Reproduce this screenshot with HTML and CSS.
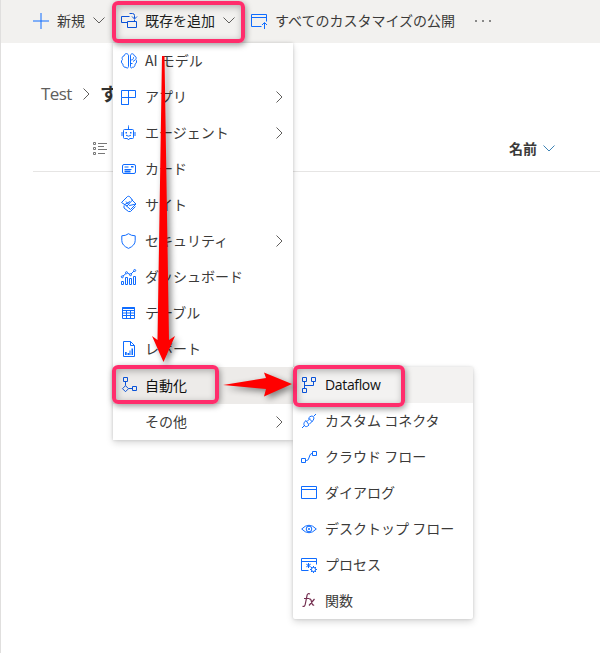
FILE: index.html
```
<!DOCTYPE html>
<html lang="ja">
<head>
<meta charset="utf-8">
<title>Test</title>
<link rel="stylesheet" href="styles.css">
</head>
<body>
<header class="bar">
  <button class="cmd new"><svg class="ic" viewBox="0 0 16 16"><path d="M8 0v16M0 8h16"/></svg><span>新規</span><svg class="chev" viewBox="0 0 12 7"><path d="M.5.5 6 6 11.5.5"/></svg></button>
  <button class="cmd add"><svg class="ic dark" viewBox="0 0 16 16"><path d="M6.500 9.500h-6v-6h8M13.500 8V6.500M6.500 8.500h9v6h-9zM8.500.500h3q2 0 2 2v3M11 3.500l2.500 2.500L16 3.500"/></svg><span>既存を追加</span><svg class="chev" viewBox="0 0 12 7"><path d="M.5.5 6 6 11.5.5"/></svg></button>
  <button class="cmd publish"><svg class="ic" viewBox="0 0 16 16"><path d="M10.500 13.500H.5V1.500h15v7M.5 4.500h15M13.500 16v-6M11 12l2.500-2.500L16 12"/></svg><span>すべてのカスタマイズの公開</span></button>
  <button class="more"><i></i><i></i><i></i></button>
</header>
<main>
  <nav class="crumb"><span>Test</span><svg class="next" viewBox="0 0 7 12"><path d="M.5.5 6 6 .5 11.500"/></svg><b>す</b></nav>
  <div class="head">
    <svg class="list" viewBox="0 0 14 13"><path d="M.5.500h2v2h-2zM.5 5.500h2v2h-2zM.5 10.500h2v2h-2zM5 1.500h9M5 4.500h6M5 7.500h9M5 11.500h7"/></svg>
    <div class="name"><b>名前</b><svg class="chev blue" viewBox="0 0 12 7"><path d="M.5.5 6 6 11.5.5"/></svg></div>
  </div>
</main>

<ul class="menu primary">
  <li><svg class="ic" viewBox="0 0 16 16"><path d="M7.500 2.200C6.500-.2 3.500.3 3.300 2.700 1 3 .8 5.500 1.500 6.400-.2 8 .2 10.500 2 11.200c-.2 2.300 1.500 3.500 3 3.100 1.200 1.500 2.500.5 2.500-.8zM9.500 2.200c.8-2.300 3.500-1.600 3.700.5 2 .4 2.400 2.500 1.500 3.700 1.500 1.500 1 4-.7 4.800.2 2.200-1.300 3.500-2.500 3.100-1 1.400-2 .5-2-.8zM9.500 7c3 0 3-1.500 3-3M9.500 10.500h2M14 7l-2 1.500"/></svg><span>AI モデル</span></li>
  <li><svg class="ic" viewBox="0 0 16 16"><path d="M.5 1.500h14v7H.5zM7.500 1.500v14h-7v-7M7.500 15.500H.5"/></svg><span>アプリ</span><svg class="next" viewBox="0 0 7 12"><path d="M.5.5 6 6 .5 11.500"/></svg></li>
  <li><svg class="ic" viewBox="0 0 16 16"><path d="M3.500 4.500h8q1 0 1 1v7q0 1-1 1h-3l-1 1.500-1-1.500h-3q-1 0-1-1v-7q0-1 1-1zM7.500 4V1.500M7 1h1M1 7v4M14 7v4M5 10.200q2.500 2 5 0"/><path class="solid" d="M4.500 7h1.500v1.500H4.500zM9 7h1.500v1.500H9z"/></svg><span>エージェント</span><svg class="next" viewBox="0 0 7 12"><path d="M.5.5 6 6 .5 11.500"/></svg></li>
  <li><svg class="ic" viewBox="0 0 16 16"><rect x="1.500" y="3.500" width="13" height="9" rx="1.500"/><path d="M3.500 6h4M3.500 8.500h7"/><path class="solid" d="M3.500 9.500h6v2h-6zM10 5h2.500v1.500H10z"/></svg><span>カード</span></li>
  <li><svg class="ic up" viewBox="0 0 16 16"><path d="m.5 6.500 6-6q1-.5 2 0l3 3.500-5.500 6zM5 5.500l3.500 4 6.500-1.500-4.500-4.500M3 9l6-3.500M15 8l-5.500 5.500L5 9.500M3 9.500v2.500l4.500 3.500h2l5-5"/></svg><span>サイト</span></li>
  <li><svg class="ic" viewBox="0 0 16 16"><path d="M.8 2.800Q4.800 2.800 7.500.7q2.700 2.100 6.700 2.100v4.700q0 5-6.700 7.900-6.700-2.900-6.700-7.900z"/></svg><span>セキュリティ</span><svg class="next" viewBox="0 0 7 12"><path d="M.5.5 6 6 .5 11.500"/></svg></li>
  <li><svg class="ic" viewBox="0 0 16 16"><path d="M.5 12.500h2v3h-2zM4.500 8.500h2v7h-2zM8.500 9.500h2v6h-2zM12.500 7.500h2v8h-2zM2 7l3-2.500M6.500 4 9 5.500M10 5l3-3"/><circle cx="1.300" cy="7.800" r="1"/><circle cx="5.500" cy="3.700" r="1"/><circle cx="9.500" cy="5.700" r="1"/><circle cx="13.700" cy="1.500" r="1"/></svg><span>ダッシュボード</span></li>
  <li><svg class="ic" viewBox="0 0 16 16"><path d="M1.500 2.500h12v11h-12zM1.500 5.500h12M1.500 8h12M1.500 10.500h12M5.500 5v8.500M9.500 5v8.500"/><path class="solid" d="M1.500 2h12v2h-12z"/></svg><span>テーブル</span></li>
  <li><svg class="ic" viewBox="0 0 16 16"><path d="M2.500.500h7l4 4v11h-11zM9.500.500v4h4"/><path class="solid" d="M4 11h1.700v3H4zM6.500 12h1.700v2H6.500zM8.500 9.500h1v4.500h-1zM10.500 7.500H12V14h-1.500z"/></svg><span>レポート</span></li>
  <li class="on"><svg class="ic dark up" viewBox="0 0 16 16"><path d="M2.500.500h4v4h-4zM4.500 4.500v4.200M4.500 8.700l3 3-3 3-3-3zM7.500 11.500h4M11.500 9.500h4v4h-4z"/></svg><span>自動化</span></li>
  <li><svg class="ic" viewBox="0 0 16 16"></svg><span>その他</span><svg class="next" viewBox="0 0 7 12"><path d="M.5.5 6 6 .5 11.500"/></svg></li>
</ul>

<ul class="menu secondary">
  <li class="on"><svg class="ic dark" viewBox="0 0 16 16"><path d="M1.500.500h4v4h-4zM10.500.500h4v4h-4zM1.500 11.500h4v4h-4zM3.500 4.500v7M3.500 8.500h9v-4"/></svg><span class="latin">Dataflow</span></li>
  <li><svg class="ic" viewBox="0 0 16 16"><path d="m1 15 3-3M12.500 3.500 15 1M8 12c-2 2-3.500 2-4.500.8S2.500 9.500 5 7.500zM7.500 5c2-2 3.500-2.500 4.700-1.300s.8 3-1.200 4.800zM6 8.500l3-3M8.500 11l3-3"/></svg><span>カスタム コネクタ</span></li>
  <li><svg class="ic" viewBox="0 0 16 16"><path d="M.5 9.500h4v4h-4zM11.500 2.500h4v4h-4zM4.500 11.500h1Q7 11.500 7.500 10l1.500-4Q9.500 4.500 11 4.500h.5"/></svg><span>クラウド フロー</span></li>
  <li><svg class="ic" viewBox="0 0 16 16"><path d="M.5 1.500h15v12H.5zM.5 4.500h15"/></svg><span>ダイアログ</span></li>
  <li><svg class="ic" viewBox="0 0 16 16"><path d="M.7 8q7.300-7.500 14.600 0Q8 15.500.7 8z"/><circle cx="8" cy="8" r="2.800"/><circle class="solid" cx="8" cy="8" r="1"/></svg><span>デスクトップ フロー</span></li>
  <li><svg class="ic" viewBox="0 0 16 16"><path d="M7.500 13.500h-7v-12h15v6M.5 4.500h15M7.500 6v5M5.300 7.200l4.400 2.600M9.700 7.200 5.300 9.800"/><circle cx="12.500" cy="12.500" r="2.100"/><path d="M12.500 9v1.500M12.500 14.500V16M9 12.500h1.500M14.500 12.500H16M10 10l1 1M14 14l1 1M15 10l-1 1M11 14l-1 1"/></svg><span>プロセス</span></li>
  <li><svg class="ic wine" viewBox="0 0 16 16"><path d="M9 1Q6.700-.1 6.100 2.200L4.200 11.500Q3.700 14 1.500 13.200M3 5.500h5M8 6q1.500-.5 2 1l1.200 4q.5 1.500 2 1M13.500 6 8 12.500"/></svg><span>関数</span></li>
</ul>

<div class="mark m1"></div>
<div class="mark m2"></div>
<div class="mark m3"></div>
<svg class="arrows" viewBox="0 0 600 653"><path d="M162 56h2.500L169 340l6-4-11.500 26L152 336l5.500 4z"/><path d="m223 385 43-7-2-5.500 28 11.500-28 12.500 2-7.500z"/></svg>
</body>
</html>
```
FILE: styles.css
```
* { box-sizing: border-box; }
body {
  margin: 0;
  height: 653px;
  position: relative;
  overflow: hidden;
  background: #fff;
  border-left: 1px solid #e0dfde;
  color: #3b3a39;
  font: 14px/20px "Noto Sans CJK JP", sans-serif;
}
button {
  border: 0;
  padding: 0;
  background: none;
  color: inherit;
  font: inherit;
}
svg { display: block; fill: none; stroke: #0f6cff; overflow: visible; }
.ic { width: 16px; height: 16px; flex: none; }
.ic.dark { stroke: #0b53d8; }
.ic.wine { stroke: #742f50; stroke-width: 1.2; }
.ic.up { margin-top: -2px; }
.solid { fill: #0f6cff; stroke: none; }
.bar { display: flex; align-items: center; height: 43px; padding: 0 0 2px 32px; background: #f2f1ef; white-space: nowrap; }
.cmd { display: flex; align-items: center; gap: 8px; }
.cmd > span { margin-top: -2px; }
.chev { width: 12px; height: 7px; stroke: #605e5c; }
.chev.blue { stroke: #3e83b5; }
.new { width: 88px; }
.add { width: 130px; color: #201f1e; }
.publish { width: 224px; }
.more { display: flex; gap: 5px; }
.more i { width: 2px; height: 2px; border-radius: 1px; background: #666; }
.crumb { display: flex; align-items: center; height: 24px; margin: 39px 0 0 40px; font-size: 18px; color: #605e5c; }
.crumb > span { width: 42px; font: 17px/24px "Open Sans", sans-serif; letter-spacing: -.6px; }
.crumb b { margin: -2px 0 0 10px; color: #323130; }
.next { width: 7px; height: 12px; stroke: #605e5c; }
.head { display: flex; align-items: center; height: 46px; margin: 20px 0 0 32px; border-bottom: 1px solid #e6e5e4; }
.list { width: 14px; height: 13px; margin-left: 60px; stroke: #777; }
.name { display: flex; align-items: center; gap: 6px; margin-left: 402px; }
.name b { margin-top: -2px; }
.menu { position: absolute; margin: 0; padding: 0; list-style: none; width: 180px; background: #fff; box-shadow: 0 3px 7px rgba(0,0,0,.15), 0 0 3px rgba(0,0,0,.14); }
.primary { left: 112px; top: 43px; height: 397px; }
.secondary { left: 292px; top: 367px; border-radius: 2px; }
.menu li { display: flex; align-items: center; height: 36px; padding: 0 10px 0 8px; white-space: nowrap; }
.menu li > span { margin: -2px 0 0 8px; }
.menu .next { margin-left: auto; }
.menu .on { background: #f3f2f1; color: #111; }
.primary .on { height: 37px; background: #edebe9; }
.menu li > .latin { margin-top: 0; font-family: "Open Sans", sans-serif; letter-spacing: -.35px; }
.mark { position: absolute; border: 4px solid #ff2d6c; border-radius: 6px; box-shadow: 1px 2px 6px rgba(0,0,0,.4), inset 1px 2px 7px rgba(0,0,0,.28); }
.m1 { left: 111px; top: 1px; width: 133px; height: 42px; }
.m2 { left: 111px; top: 365px; width: 107px; height: 39px; }
.m3 { left: 292px; top: 365px; width: 112px; height: 42px; }
.arrows { position: absolute; left: -1px; top: 0; width: 600px; height: 653px; pointer-events: none; filter: drop-shadow(3px 3px 3px rgba(0,0,0,.45)); }
.arrows path { fill: red; stroke: none; }
```
